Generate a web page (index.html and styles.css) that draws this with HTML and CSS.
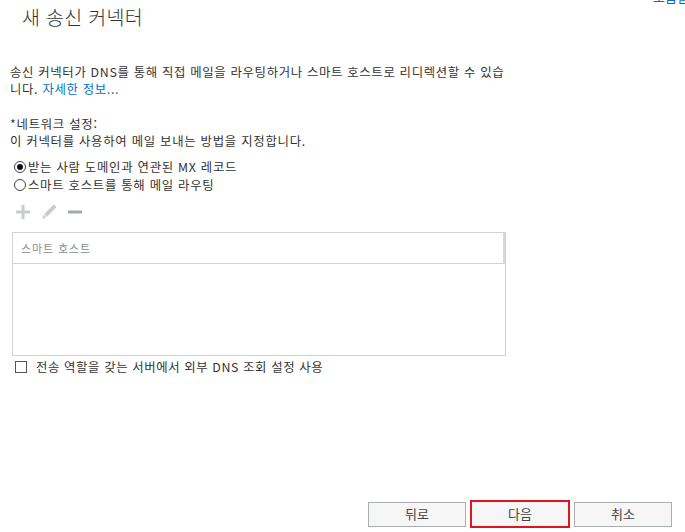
FILE: index.html
```html
<!DOCTYPE html>
<html lang="ko">
<head>
<meta charset="utf-8">
<link rel="stylesheet" href="styles.css">
</head>
<body>
<div class="page">
  <a class="help" href="#">도움말</a>
  <h1 class="title">새 송신 커넥터</h1>
  <p class="desc">송신 커넥터가 DNS를 통해 직접 메일을 라우팅하거나 스마트 호스트로 리디렉션할 수 있습<br>니다. <a href="#" class="link">자세한 정보...</a></p>

  <div class="section">
    <div class="label">*네트워크 설정:</div>
    <div class="hint">이 커넥터를 사용하여 메일 보내는 방법을 지정합니다.</div>
    <div class="radios">
      <label class="radio"><span class="dot checked"></span>받는 사람 도메인과 연관된 MX 레코드</label>
      <label class="radio"><span class="dot"></span>스마트 호스트를 통해 메일 라우팅</label>
    </div>
  </div>

  <div class="toolbar">
    <svg class="ico" width="16" height="16" viewBox="0 0 16 16"><path d="M6.5 1h3v5.5H15v3H9.5V15h-3V9.5H1v-3h5.5z" fill="#c8cccc"/></svg>
    <svg class="ico" width="18" height="18" viewBox="0 0 18 18"><path d="M13.8 1.5l2.7 2.7-9.6 9.6-2.7-2.7z" fill="#c8cccc"/><path d="M3.6 11.6l2.8 2.8-4.2 1.4z" fill="#c8cccc"/></svg>
    <svg class="ico" width="16" height="16" viewBox="0 0 16 16"><rect x="1" y="6.5" width="14" height="3" fill="#a3aaaa"/></svg>
  </div>

  <div class="grid">
    <div class="grid-head"><span class="col">스마트 호스트</span></div>
    <div class="grid-body"></div>
  </div>

  <label class="check"><span class="box"></span>전송 역할을 갖는 서버에서 외부 DNS 조회 설정 사용</label>
</div>
<div class="footer">
  <button class="btn">뒤로</button>
  <button class="btn primary">다음</button>
  <button class="btn">취소</button>
</div>
</body>
</html>
```

FILE: styles.css
```css
html, body {
  margin: 0;
  padding: 0;
  background: #ffffff;
}
body {
  width: 685px;
  height: 532px;
  position: relative;
  overflow: hidden;
  font-family: "Noto Sans CJK KR", "Noto Sans", sans-serif;
  font-size: 12px;
  color: #333333;
}
.page {
  padding: 0 0 0 10px;
}
.help {
  position: absolute;
  top: -13px;
  right: -4px;
  color: #0072c6;
  text-decoration: none;
  font-size: 13px;
}
.title {
  margin: 0;
  padding: 3px 0 0 12px;
  font-size: 19.5px;
  font-weight: 300;
  line-height: 28px;
  color: #333333;
  letter-spacing: 0.3px;
}
.desc {
  margin: 33px 0 0 0;
  line-height: 17px;
  font-size: 12.4px;
  letter-spacing: 0.66px;
  white-space: nowrap;
}
.link {
  color: #0072c6;
  text-decoration: none;
}
.section {
  margin-top: 18px;
}
.label, .hint {
  line-height: 17px;
  font-size: 12.4px;
  letter-spacing: 0.72px;
}
.radios {
  margin-top: 8px;
  display: flex;
  flex-direction: column;
}
.radio {
  display: flex;
  align-items: center;
  height: 18px;
  font-size: 12.4px;
  letter-spacing: 0.72px;
}
.dot {
  width: 10px;
  height: 10px;
  border: 1px solid #444;
  border-radius: 50%;
  margin: 0 2px 0 4px;
  position: relative;
  box-sizing: content-box;
}
.dot.checked::after {
  content: "";
  position: absolute;
  left: 2px;
  top: 2px;
  width: 6px;
  height: 6px;
  border-radius: 50%;
  background: #111;
}
.toolbar {
  display: flex;
  gap: 9px;
  align-items: center;
  margin: 9px 0 0 5px;
  height: 18px;
}
.grid {
  margin: 11px 0 0 2px;
  width: 492px;
  height: 122px;
  border: 1px solid #cfd3d3;
  display: flex;
  flex-direction: column;
}
.grid-head {
  border-bottom: 1px solid #cfd3d3;
  border-right: 2px solid #d6d9d9;
  display: flex;
  align-items: center;
  padding-left: 8px;
  box-sizing: border-box;
  height: 31px;
}
.col {
  font-size: 11px;
  color: #8a8f8f;
  letter-spacing: 0.9px;
}
.grid-body {
  flex: 1;
}
.check {
  display: flex;
  align-items: center;
  margin: 2px 0 0 5px;
  height: 18px;
  font-size: 12.4px;
  letter-spacing: 0.6px;
}
.box {
  width: 10px;
  height: 10px;
  border: 1px solid #555;
  margin-right: 9px;
}
.footer {
  position: absolute;
  left: 368px;
  top: 500px;
  display: flex;
  gap: 4px;
  align-items: center;
}
.btn {
  font-family: "Noto Sans CJK KR", "Noto Sans", sans-serif;
  font-size: 13px;
  color: #444;
  background: #f6f6f6;
  border: 1px solid #a8aeae;
  width: 98px;
  height: 25px;
  padding: 0;
  line-height: 22px;
}
.btn.primary {
  border: 2px solid #e0141e;
  width: 100px;
  height: 28px;
}
```
